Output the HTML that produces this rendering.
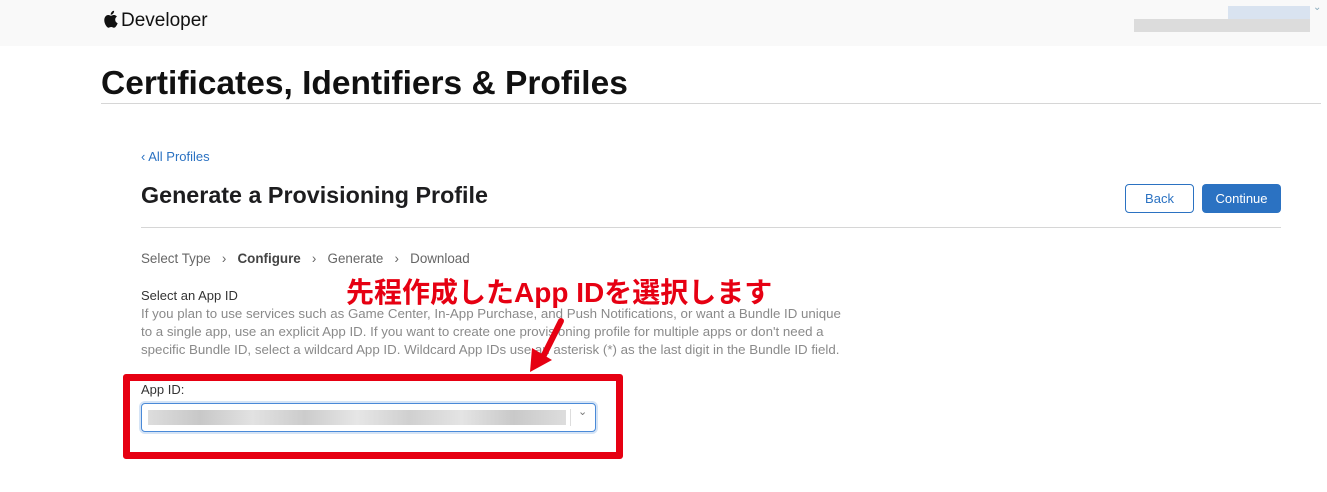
<!DOCTYPE html>
<html><head><meta charset="utf-8"><style>
*{margin:0;padding:0;box-sizing:border-box}
body{width:1327px;height:492px;background:#fff;font-family:"Liberation Sans",sans-serif;position:relative;overflow:hidden;color:#1d1d1f}
.abs{position:absolute;white-space:nowrap}
.hdr{position:absolute;left:0;top:0;width:1327px;height:46px;background:#f9f9f9}
.blur{position:absolute;height:13px}
</style></head><body>
<div class="hdr"></div>
<svg class="abs" style="left:102px;top:10px" width="16" height="18" viewBox="0 0 16 18"><path fill="#111" d="M13.2 9.6c0-2 1.6-2.9 1.7-3-1-1.4-2.4-1.6-2.9-1.6-1.2-.1-2.4.7-3 .7s-1.6-.7-2.6-.7C5 5 3.7 5.8 3 7.1c-1.5 2.6-.4 6.4 1 8.5.7 1 1.5 2.2 2.6 2.1 1-.1 1.4-.7 2.7-.7 1.2 0 1.6.7 2.7.7 1.1 0 1.8-1 2.5-2.1.8-1.2 1.1-2.3 1.1-2.4 0 0-2.4-.9-2.4-3.6zM11.2 3.5c.6-.7 1-1.7.9-2.7-.9 0-1.9.6-2.5 1.3-.5.6-1 1.6-.9 2.6 1 .1 1.9-.5 2.5-1.2z"/></svg>
<div class="abs" style="left:121px;top:10px;font-size:19px;color:#111">Developer</div>
<div class="blur" style="left:1228px;top:6px;width:82px;background:#d9e3f0"></div>
<div class="blur" style="left:1134px;top:19px;width:176px;background:#dcdcdc"></div>
<div class="abs" style="left:1313px;top:2px;font-size:10px;color:#8ab">&#8964;</div>
<div class="abs" style="left:101px;top:65px;font-size:33.5px;font-weight:bold;color:#111">Certificates, Identifiers &amp; Profiles</div>
<div class="abs" style="left:101px;top:103px;width:1220px;height:1px;background:#d6d6d6"></div>
<div class="abs" style="left:141px;top:149px;font-size:13px;color:#2b72c2">‹ All Profiles</div>
<div class="abs" style="left:141px;top:182px;font-size:23.3px;font-weight:bold;color:#1d1d1f">Generate a Provisioning Profile</div>
<div class="abs" style="left:1125px;top:184px;width:69px;height:29px;border:1px solid #2b72c2;border-radius:4px;color:#2b72c2;font-size:13px;text-align:center;line-height:27px">Back</div>
<div class="abs" style="left:1202px;top:184px;width:79px;height:29px;background:#2b72c2;border-radius:4px;color:#fff;font-size:13px;text-align:center;line-height:29px">Continue</div>
<div class="abs" style="left:141px;top:227px;width:1140px;height:1px;background:#d6d6d6"></div>
<div class="abs" style="left:141px;top:251px;font-size:13.4px;color:#666">Select Type &nbsp;&nbsp;›&nbsp;&nbsp; <b style="color:#444">Configure</b> &nbsp;&nbsp;›&nbsp;&nbsp; Generate &nbsp;&nbsp;›&nbsp;&nbsp; Download</div>
<div class="abs" style="left:141px;top:288px;font-size:13px;color:#333">Select an App ID</div>
<div class="abs" style="left:141px;top:305px;font-size:13.3px;color:#8a8a8a;line-height:18px">If you plan to use services such as Game Center, In-App Purchase, and Push Notifications, or want a Bundle ID unique<br>to a single app, use an explicit App ID. If you want to create one provisioning profile for multiple apps or don't need a<br>specific Bundle ID, select a wildcard App ID. Wildcard App IDs use an asterisk (*) as the last digit in the Bundle ID field.</div>
<div class="abs" style="left:346px;top:271px;font-size:28px;font-weight:bold;color:#e60012;font-family:'Liberation Sans','Noto Sans CJK JP',sans-serif;text-shadow:0 0 2px #fff,0 0 2px #fff,0 0 3px #fff">先程作成したApp IDを選択します</div>
<svg class="abs" style="left:520px;top:315px" width="50" height="62"><path d="M41 6 L22 44" stroke="#e60012" stroke-width="6" stroke-linecap="round"/><path d="M10 57 L12 33 L32 45 Z" fill="#e60012"/></svg>
<div class="abs" style="left:123px;top:374px;width:500px;height:85px;border:7px solid #e60012;border-radius:3px"></div>
<div class="abs" style="left:141px;top:382px;font-size:13px;color:#333">App ID:</div>
<div class="abs" style="left:141px;top:403px;width:455px;height:29px;border:1px solid #4a8ad8;border-radius:4px;box-shadow:0 0 0 2px #d5e4f6;background:#fff"></div>
<div class="blur" style="left:148px;top:410px;width:418px;height:15px;background:linear-gradient(90deg,#ddd,#c8c8c8,#e2e2e2,#ccc,#e6e6e6,#d0d0d0,#e4e4e4,#c9c9c9,#ddd)"></div>
<div class="abs" style="left:570px;top:409px;width:1px;height:17px;background:#ddd"></div>
<div class="abs" style="left:578px;top:405px;font-size:11px;color:#777">&#8964;</div>
</body></html>
